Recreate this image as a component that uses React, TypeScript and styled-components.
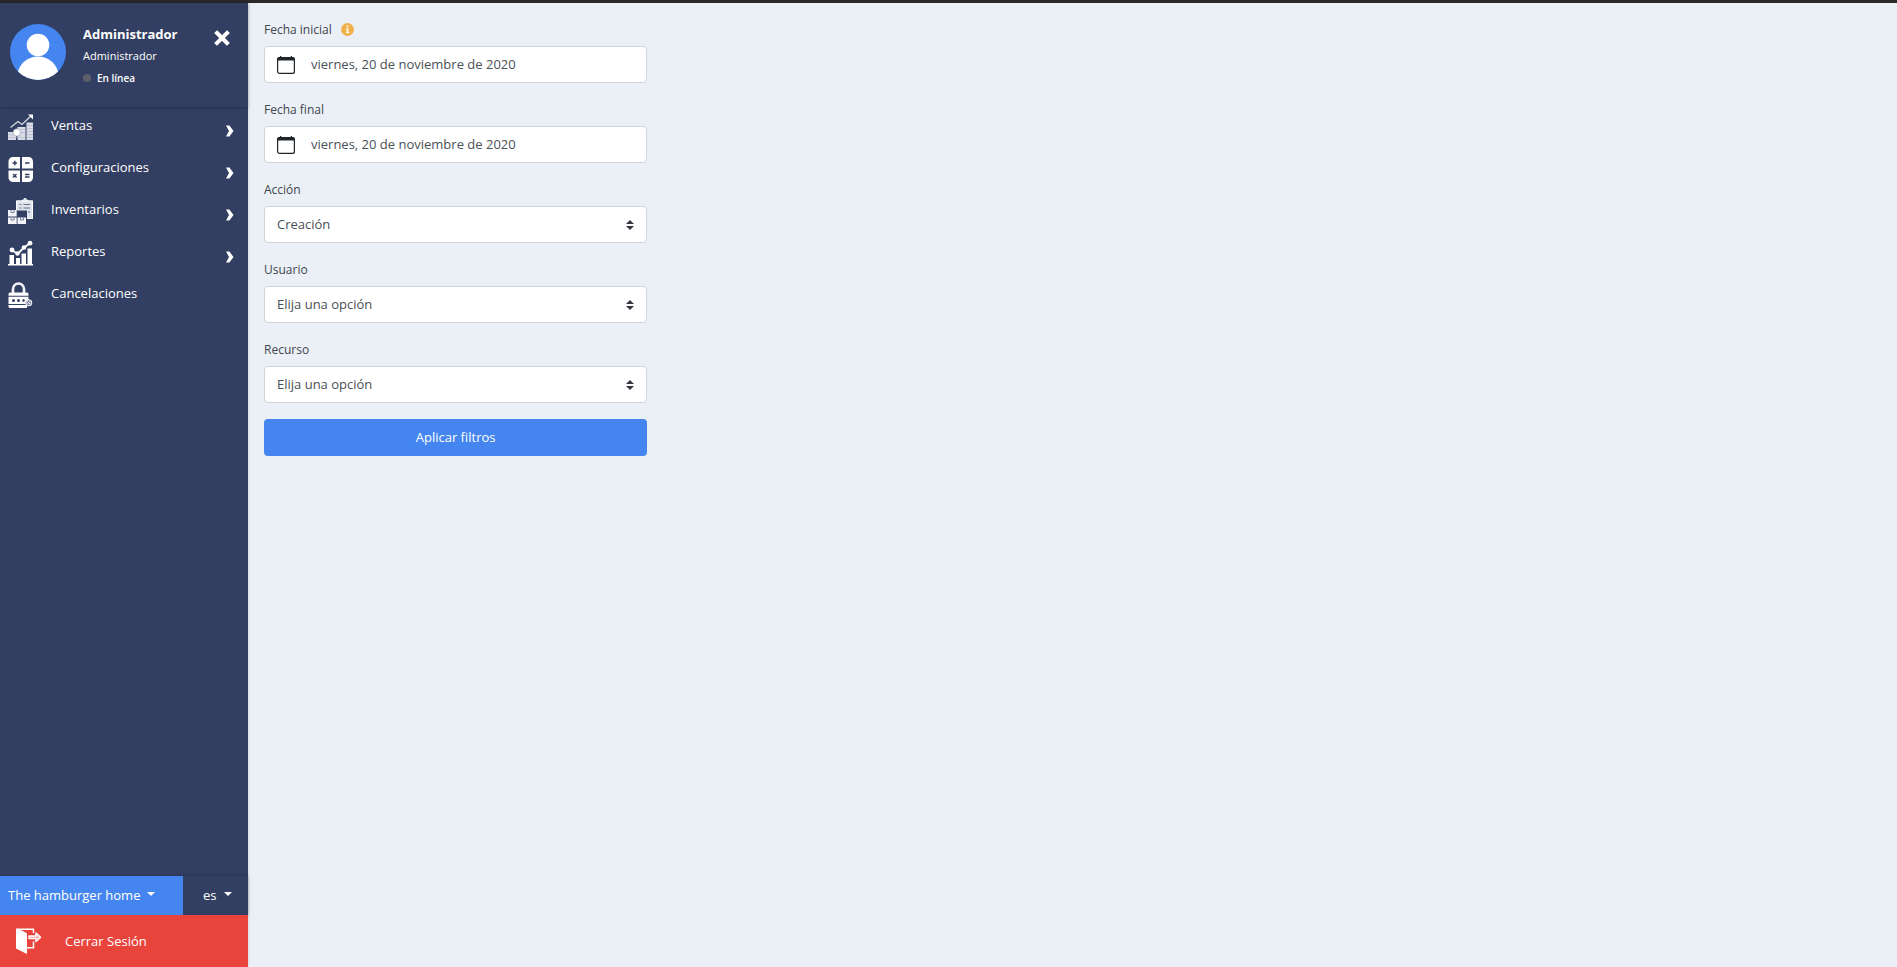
import React from "react";
import styled, { createGlobalStyle } from "styled-components";

const GlobalStyle = createGlobalStyle`
  *, *::before, *::after { box-sizing: border-box; }
  body {
    margin: 0;
    background: #ebf0f7;
    color: #40454c;
    font-family: "Open Sans", "Noto Sans", sans-serif;
    font-size: 13px;
    line-height: 20px;
  }
  button, input, select { font: inherit; color: inherit; }
`;

const Page = styled.div`
  display: flex;
  min-height: 100vh;
  border-top: 3px solid #292929;
`;

const Sidebar = styled.aside`
  display: flex;
  flex-direction: column;
  flex: none;
  width: 248px;
  background: #333f62;
  color: #fff;
  box-shadow: 0 0 3px rgba(0, 0, 0, 0.15);
`;

const Profile = styled.header`
  display: flex;
  align-items: flex-start;
  height: 104px;
  padding: 21px 18px 0 10px;
  box-shadow: 0 1px 3px rgba(0, 0, 0, 0.25);
`;

const ProfileText = styled.div`
  display: flex;
  flex-direction: column;
  flex: 1;
  gap: 1px;
  margin-left: 17px;
`;

const Name = styled.strong`
  font-size: 13px;
  font-weight: 700;
  line-height: 20px;
`;

const Role = styled.span`
  font-size: 11px;
  line-height: 22px;
`;

const Status = styled.span`
  display: flex;
  align-items: center;
  gap: 6px;
  font-size: 10px;
  font-weight: 600;
  line-height: 20px;
`;

const Dot = styled.i`
  width: 8px;
  height: 8px;
  border-radius: 50%;
  background: #5c5f69;
`;

const CloseButton = styled.button`
  display: flex;
  margin-top: 6px;
  padding: 0;
  border: 0;
  background: none;
  cursor: pointer;
`;

const Nav = styled.nav`
  flex: 1;
`;

const NavList = styled.ul`
  margin: 0;
  padding: 0;
  list-style: none;
`;

const NavLink = styled.a`
  display: flex;
  align-items: center;
  height: 42px;
  padding: 0 8px 2px 8px;
  color: #fff;
  font-weight: 500;
  text-decoration: none;

  span { flex: 1; margin-left: 17px; padding-bottom: 4px; }
  svg:last-child:not(:first-child) { margin-top: 8px; }
`;

const Selectors = styled.div`
  display: flex;
  height: 39px;
  box-shadow: 0 0 3px rgba(0, 0, 0, 0.3);
`;

const DropdownButton = styled.button<{ $primary?: boolean }>`
  display: flex;
  align-items: center;
  gap: 7px;
  width: ${(p) => (p.$primary ? "183px" : "65px")};
  padding: ${(p) => (p.$primary ? "0 8px 2px" : "0 0 2px 20px")};
  border: 0;
  background: ${(p) => (p.$primary ? "#4585ef" : "transparent")};
  font-weight: 500;
  white-space: nowrap;
  cursor: pointer;

  &::after {
    content: "";
    margin-bottom: 2px;
    border: 4px solid transparent;
    border-top-color: #fff;
    border-bottom: 0;
  }
`;

const LogoutButton = styled.button`
  display: flex;
  align-items: center;
  gap: 23px;
  height: 52px;
  padding: 0 16px;
  border: 0;
  background: #e8443c;
  font-weight: 500;
  cursor: pointer;
`;

const Main = styled.main`
  flex: 1;
  min-width: 0;
`;

const Filters = styled.form`
  display: flex;
  flex-direction: column;
  gap: 16px;
  width: 25%;
  min-width: 280px;
  padding: 16px 13px 16px 16px;
`;

const Field = styled.div`
  display: flex;
  flex-direction: column;
  gap: 6px;
`;

const LabelRow = styled.div`
  display: flex;
  align-items: center;
  gap: 9px;
  height: 21px;
  font-size: 12px;
`;

const Control = styled.div`
  display: flex;
  align-items: center;
  position: relative;
  height: 37px;
  border: 1px solid #ced4da;
  border-radius: 4px;
  background: #fff;
  color: #495057;
`;

const CalendarButton = styled.button`
  display: flex;
  padding: 0 12px;
  border: 0;
  background: none;
  color: #212529;
  cursor: pointer;
`;

const DateInput = styled.input`
  flex: 1;
  min-width: 0;
  height: 100%;
  padding: 0 4px 2px;
  border: 0;
  background: none;
`;

const Select = styled.select`
  width: 100%;
  height: 100%;
  padding: 0 32px 2px 12px;
  border: 0;
  border-radius: 4px;
  background: transparent;
  appearance: none;
`;

const SelectArrows = styled.svg`
  position: absolute;
  right: 12px;
  pointer-events: none;
`;

const SubmitButton = styled.button`
  height: 37px;
  padding-bottom: 2px;
  border: 0;
  border-radius: 4px;
  background: #4585ef;
  color: #fff;
  font-weight: 500;
  cursor: pointer;
`;

const Avatar = () => (
  <svg width="56" height="56" viewBox="0 0 56 56" aria-hidden="true">
    <defs>
      <clipPath id="avatar"><circle cx="28" cy="28" r="28" /></clipPath>
    </defs>
    <g clipPath="url(#avatar)">
      <rect width="56" height="56" fill="#4585ef" />
      <circle cx="28" cy="21" r="11.3" fill="#fff" />
      <ellipse cx="28" cy="52" rx="20.5" ry="19.5" fill="#fff" />
    </g>
  </svg>
);

const CloseIcon = () => (
  <svg width="16" height="16" viewBox="0 0 16 16" aria-hidden="true">
    <path d="M3 3l10 10M13 3L3 13" stroke="#fff" strokeWidth="4" strokeLinecap="square" />
  </svg>
);

const ChevronIcon = () => (
  <svg width="20" height="12" viewBox="0 0 20 12" aria-hidden="true">
    <path d="M6 .5h3.4L13.5 6l-4.1 5.500H6L9 6z" fill="#fff" />
  </svg>
);

const NavIcon = ({ children }: { children: React.ReactNode }) => (
  <svg width="26" height="26" viewBox="0 0 26 26" aria-hidden="true">{children}</svg>
);

const SalesIcon = () => (
  <NavIcon>
    <path d="M2.500 13.500l7.500-6 4 3L23 2" fill="none" stroke="#d5d9e4" strokeWidth="1.300" />
    <path d="M20 .5h5v5z" fill="#fff" />
    <g fill="#d9dce6">
      <path d="M18.500 8.500H25V26h-6.500z" />
      <path d="M9.500 13H17.500V26H9.500z" />
      <path d="M0 18h8v8H0z" />
    </g>
    <path d="M18.500 11.500H25M18.500 14.500H25M18.500 17.500H25M18.500 20.500H25M18.500 23.500H25M12 15.500h5.500M12 18.500h5.500M0 20.500h5M0 23.500h17.500" stroke="#aab0c4" strokeWidth=".6" />
    <circle cx="8.800" cy="18.500" r="3.700" fill="#fff" stroke="#8990aa" strokeWidth=".6" />
  </NavIcon>
);

const SettingsIcon = () => (
  <NavIcon>
    <path fill="#fff" d="M5 1h7v11.500H.500V5.500A4.500 4.500 0 0 1 5 1zM14 1h6.500A4.500 4.500 0 0 1 25 5.500v7H14zM.500 14.500H12V26H5A4.500 4.500 0 0 1 .500 21.500zM14 14.500h11v7a4.500 4.500 0 0 1-4.500 4.500H14z" />
    <path stroke="#333f62" strokeWidth="1.500" fill="none" d="M4.500 7h4.500M6.800 4.800v4.500M17 7h4.500M5 18l3.500 3.500M8.500 18L5 21.500M17 18.500h4.500M17 21h4.500" />
  </NavIcon>
);

const InventoryIcon = () => (
  <NavIcon>
    <path fill="#dfe3ec" d="M8 2.500h5.500l1-1h1L16 0h2l.6 1.500h1l1 1H25V21h-6v-8.500H8z" />
    <path fill="none" stroke="#fff" d="M8.500 12V3h16v17.500H19" />
    <path fill="none" stroke="#66708d" d="M15.500 6.500H22M15.500 10H22M20 14h2M11.500 6.500h2M11.500 10h2" />
    <path fill="#f1f3f7" d="M0 12h8.700v6.500H0zM0 19.500h8.700V26H0zM9.500 19.500H18V26H9.500z" />
    <path fill="none" stroke="#7881a0" d="M3 12v2.500h3V12M3 19.500V22h3v-2.500M12.500 19.500V22h3v-2.500" />
  </NavIcon>
);

const ReportsIcon = () => (
  <NavIcon>
    <path fill="#fff" d="M0 24h25v1.500H0zM1.500 15H6v9H1.500zM8 18h4v6H8zM13.500 13.500H18V24h-4.500zM19.500 8.500h4.500V24h-4.500z" />
    <path fill="none" stroke="#fff" strokeWidth="1.800" d="M4 10l5.500 4L16 7.500 22.500 3" />
    <g fill="#fff">
      <circle cx="4" cy="10" r="2.400" /><circle cx="9.500" cy="13.500" r="2.200" />
      <circle cx="16" cy="7.500" r="2.300" /><circle cx="22" cy="3.200" r="2.400" />
    </g>
  </NavIcon>
);

const CancelIcon = () => (
  <NavIcon>
    <path fill="none" stroke="#f4f5f8" strokeWidth="2.600" d="M5 11V7a5.500 5.500 0 0 1 11 0v4" />
    <path fill="#fff" d="M2 10.500h17a1.500 1.500 0 0 1 1.500 1.500v1.700H.500V12A1.500 1.500 0 0 1 2 10.500zM.500 14.800h20V22H.500zM.500 23h18.500v3H2a1.500 1.500 0 0 1-1.500-1.500z" />
    <g fill="#333f62">
      <circle cx="5.500" cy="18.500" r="1.500" /><circle cx="10.500" cy="18.500" r="1.500" /><circle cx="15.500" cy="18.500" r="1.300" />
    </g>
    <circle cx="20.700" cy="20.700" r="2.900" fill="#6c7590" stroke="#e5e8ef" strokeWidth="1.300" />
    <path stroke="#fff" strokeWidth=".9" d="M19.300 19.300l2.800 2.800M22.100 19.300l-2.800 2.800" />
  </NavIcon>
);

const LogoutIcon = () => (
  <svg width="26" height="26" viewBox="0 0 26 26" aria-hidden="true">
    <path fill="none" stroke="#fff" strokeWidth="1.500" d="M1 1.200h16.500V5M17.500 13.500v6.300H11" />
    <path fill="#fff" d="M0 .500L3 1l8 4.300V26L0 20.500z" />
    <path fill="#f6b9b4" stroke="#fff" strokeWidth="1.400" strokeLinejoin="round" d="M13 8h7V5l4.600 4.300L20 13.600v-3H13z" />
  </svg>
);

const InfoIcon = () => (
  <svg width="13" height="13" viewBox="0 0 13 13" role="img" aria-label="Información">
    <circle cx="6.500" cy="6.500" r="6.500" fill="#f0b04b" />
    <path fill="#fff5e3" d="M5.500 2.500h2v1.700h-2zM5 5.200h2.500v3.900h.8v1.200H4.900V9.100h.7V6.300H5z" />
  </svg>
);

const CalendarIcon = () => (
  <svg width="18" height="18" viewBox="0 0 18 18" aria-hidden="true">
    <rect x=".600" y="1.600" width="16.800" height="15.800" rx="2" fill="none" stroke="currentColor" strokeWidth="1.200" />
    <path fill="currentColor" d="M0 4a3 3 0 0 1 3-3V0h1.200v1h9.600V0H15v1a3 3 0 0 1 3 3v.5H0z" />
  </svg>
);

const navItems = [
  { label: "Ventas", icon: <SalesIcon />, expandable: true },
  { label: "Configuraciones", icon: <SettingsIcon />, expandable: true },
  { label: "Inventarios", icon: <InventoryIcon />, expandable: true },
  { label: "Reportes", icon: <ReportsIcon />, expandable: true },
  { label: "Cancelaciones", icon: <CancelIcon />, expandable: false },
];

const DateField = ({ id, label, info }: { id: string; label: string; info?: boolean }) => (
  <Field>
    <LabelRow>
      <label htmlFor={id}>{label}</label>
      {info && <InfoIcon />}
    </LabelRow>
    <Control>
      <CalendarButton type="button" aria-label="Abrir calendario"><CalendarIcon /></CalendarButton>
      <DateInput id={id} readOnly value="viernes, 20 de noviembre de 2020" />
    </Control>
  </Field>
);

const SelectField = ({ id, label, value }: { id: string; label: string; value: string }) => (
  <Field>
    <LabelRow><label htmlFor={id}>{label}</label></LabelRow>
    <Control>
      <Select id={id} defaultValue={value}><option>{value}</option></Select>
      <SelectArrows width="8" height="10" viewBox="0 0 8 10" aria-hidden="true">
        <path fill="#343a40" d="M4 0l4 4H0zM0 6h8l-4 4z" />
      </SelectArrows>
    </Control>
  </Field>
);

export default function App() {
  return (
    <>
      <GlobalStyle />
      <Page>
        <Sidebar>
          <Profile>
            <Avatar />
            <ProfileText>
              <Name>Administrador</Name>
              <Role>Administrador</Role>
              <Status><Dot />En línea</Status>
            </ProfileText>
            <CloseButton type="button" aria-label="Cerrar menú"><CloseIcon /></CloseButton>
          </Profile>
          <Nav>
            <NavList>
              {navItems.map(({ label, icon, expandable }) => (
                <li key={label}>
                  <NavLink href="#">
                    {icon}
                    <span>{label}</span>
                    {expandable && <ChevronIcon />}
                  </NavLink>
                </li>
              ))}
            </NavList>
          </Nav>
          <Selectors>
            <DropdownButton type="button" $primary>The hamburger home</DropdownButton>
            <DropdownButton type="button">es</DropdownButton>
          </Selectors>
          <LogoutButton type="button"><LogoutIcon />Cerrar Sesión</LogoutButton>
        </Sidebar>
        <Main>
          <Filters>
            <DateField id="start" label="Fecha inicial" info />
            <DateField id="end" label="Fecha final" />
            <SelectField id="action" label="Acción" value="Creación" />
            <SelectField id="user" label="Usuario" value="Elija una opción" />
            <SelectField id="resource" label="Recurso" value="Elija una opción" />
            <SubmitButton type="submit">Aplicar filtros</SubmitButton>
          </Filters>
        </Main>
      </Page>
    </>
  );
}
